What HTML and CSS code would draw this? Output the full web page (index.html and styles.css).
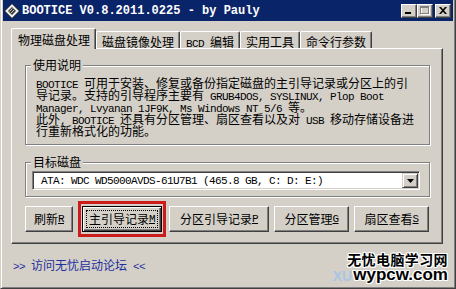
FILE: index.html
```html
<!DOCTYPE html>
<html lang="zh-CN">
<head>
<meta charset="utf-8">
<title>BOOTICE</title>
<link rel="stylesheet" href="styles.css">
</head>
<body>
<div class="window">
  <div class="titlebar">
    <svg class="app-icon" width="16" height="16" viewBox="0 0 16 16">
      <polygon points="8,0.5 15.5,8 8,15.5 0.5,8" fill="#eeeeee" stroke="#111" stroke-width="1"/>
      <polygon points="4,8 8,4 12,8 8,12" fill="#3a3a3a"/>
      <line x1="5.5" y1="8.5" x2="8.5" y2="5.5" stroke="#cfcfcf" stroke-width="0.9"/>
      <line x1="7" y1="10" x2="10" y2="7" stroke="#cfcfcf" stroke-width="0.9"/>
    </svg>
    <span class="title">BOOTICE V0.8.2011.0225 - by Pauly</span>
    <div class="caption-btns">
      <span class="cbtn"><svg width="8" height="7" viewBox="0 0 8 7"><rect x="0" y="5" width="6" height="2" fill="#000"/></svg></span>
      <span class="cbtn"><svg width="10" height="9" viewBox="0 0 10 9"><rect x="1.5" y="1.5" width="8" height="7" fill="none" stroke="#fff"/><rect x="0.5" y="0.5" width="8" height="7" fill="none" stroke="#808080"/><rect x="0" y="1" width="9" height="1" fill="#808080"/></svg></span>
      <span class="cbtn close"><svg width="8" height="7" viewBox="0 0 8 7"><path d="M0 0h2l2 2.2L6 0h2L5 3.5 8 7H6L4 4.8 2 7H0l3-3.5z" fill="#000"/></svg></span>
    </div>
  </div>

  <div class="client">
    <div class="tabs">
      <div class="tab active">物理磁盘处理</div>
      <div class="tab">磁盘镜像处理</div>
      <div class="tab"><span class="m">BCD </span>编辑</div>
      <div class="tab">实用工具</div>
      <div class="tab">命令行参数</div>
    </div>

    <div class="panel">
      <fieldset class="group info">
        <legend>使用说明</legend>
        <div class="line"><span class="m">BOOTICE </span>可用于安装、修复或备份指定磁盘的主引导记录或分区上的引</div>
        <div class="line">导记录。支持的引导程序主要有<span class="m"> GRUB4DOS, SYSLINUX, Plop Boot</span></div>
        <div class="line"><span class="m">Manager, Lvyanan 1JF9K, Ms Windows NT 5/6 </span>等。</div>
        <div class="line">此外<span class="m">, BOOTICE </span>还具有分区管理、扇区查看以及对<span class="m"> USB </span>移动存储设备进</div>
        <div class="line">行重新格式化的功能。</div>
      </fieldset>

      <fieldset class="group disk">
        <legend>目标磁盘</legend>
        <div class="combo">
          <span class="combo-text m">ATA: WDC WD5000AVDS-61U7B1 (465.8 GB, C: D: E:)</span>
          <span class="combo-btn"><svg width="7" height="4" viewBox="0 0 7 4"><path d="M0 0h7L3.5 4z" fill="#000"/></svg></span>
        </div>
      </fieldset>

      <div class="actions">
        <button class="btn w-refresh">刷新<u class="m">R</u></button>
        <div class="highlight">
          <button class="btn default w-mbr"><span class="focus">主引导记录<u class="m">M</u></span></button>
        </div>
        <button class="btn w-pbr">分区引导记录<u class="m">P</u></button>
        <button class="btn w-part">分区管理<u class="m">G</u></button>
        <button class="btn w-part">扇区查看<u class="m">S</u></button>
      </div>
    </div>

    <div class="link"><span class="m">&gt;&gt; </span>访问无忧启动论坛<span class="m"> &lt;&lt;</span></div>
  </div>

  <div class="watermark">
    <div class="wm-cn">无忧电脑学习网</div>
    <div class="wm-row"><span class="wm-faint">XU</span><span class="wm-en">wypcw.com</span></div>
  </div>
</div>
</body>
</html>
```

FILE: styles.css
```css
* { box-sizing: border-box; }

html, body {
  margin: 0;
  padding: 0;
}

body {
  width: 456px;
  height: 289px;
  overflow: hidden;
  background: #d4d0c8;
  font-family: "Noto Sans CJK SC", "Liberation Sans", sans-serif;
  font-size: 12px;
  line-height: 12px;
  color: #000;
}

.m {
  font-family: "Liberation Mono", "Noto Sans CJK SC", monospace;
  font-size: 11px;
  letter-spacing: -0.6px;
}

.window {
  position: relative;
  width: 456px;
  height: 289px;
  background: #d4d0c8;
  border-left: 1px solid #d4d0c8;
  border-right: 1px solid #404040;
  border-bottom: 1px solid #404040;
  box-shadow: inset 1px 0 #fff, inset -1px -1px #808080;
  padding: 0 2px 2px 2px;
  display: flex;
  flex-direction: column;
}

/* title bar */
.titlebar {
  height: 21px;
  flex: none;
  background: #0a246a;
  display: flex;
  align-items: center;
  padding: 0 2px 0 1px;
}

.app-icon {
  flex: none;
  margin-top: 1px;
}

.title {
  margin-left: 2px;
  color: #fff;
  font-family: "Liberation Mono", monospace;
  font-weight: bold;
  font-size: 12px;
  white-space: nowrap;
}

.caption-btns {
  margin-left: auto;
  display: flex;
  align-items: center;
}

.cbtn {
  width: 16px;
  height: 14px;
  background: #d4d0c8;
  border: 1px solid;
  border-color: #fff #404040 #404040 #fff;
  box-shadow: inset -1px -1px #808080;
  display: flex;
  align-items: center;
  justify-content: center;
}

.cbtn.close {
  margin-left: 2px;
}

/* client area */
.client {
  flex: 1;
  padding: 7px 10px 0 8px;
  display: flex;
  flex-direction: column;
}

.tabs {
  display: flex;
  align-items: flex-end;
  height: 20px;
}

.tab {
  height: 17px;
  padding: 4px 5px 0 5px;
  border-top: 1px solid #fff;
  border-left: 1px solid #fff;
  border-right: 1px solid #404040;
  box-shadow: inset -1px 0 #808080;
  border-radius: 2px 2px 0 0;
  background: #d4d0c8;
  white-space: nowrap;
}

.tab.active {
  position: relative;
  z-index: 1;
  height: 21px;
  margin-bottom: -1px;
  padding: 5px 5px 0 6px;
}

.panel {
  border-top: 1px solid #fff;
  border-left: 1px solid #fff;
  border-right: 1px solid #404040;
  border-bottom: 1px solid #404040;
  box-shadow: inset -1px -1px #808080;
  padding: 10px 12px 11px 13px;
}

/* group boxes */
.group {
  margin: 0;
  min-width: 0;
  border: 1px solid #808080;
  box-shadow: inset 1px 1px #fff, 1px 1px #fff;
}

.group legend {
  padding: 0 2px;
  line-height: 12px;
  background: #d4d0c8;
}

.info {
  padding: 6px 10px 7px 10px;
}

.info legend {
  margin-left: -5px;
}

.line {
  height: 12px;
  line-height: 12px;
  white-space: nowrap;
}

.disk {
  margin-top: 11px;
  padding: 3px 9px 6px 6px;
}

.disk legend {
  margin-left: -1px;
}

.combo {
  height: 19px;
  display: flex;
  align-items: center;
  background: #fff;
  border: 1px solid;
  border-color: #808080 #fff #fff #808080;
  box-shadow: inset 1px 1px #404040, inset -1px -1px #d4d0c8;
  padding: 1px 1px 1px 8px;
}

.combo-text {
  flex: 1;
  white-space: nowrap;
}

.combo-btn {
  width: 16px;
  height: 15px;
  background: #d4d0c8;
  border: 1px solid;
  border-color: #d4d0c8 #404040 #404040 #d4d0c8;
  box-shadow: inset 1px 1px #fff, inset -1px -1px #808080;
  display: flex;
  align-items: center;
  justify-content: center;
}

/* buttons */
.actions {
  display: flex;
  align-items: center;
  gap: 5px;
  margin-top: 9px;
}

.btn {
  height: 26px;
  margin: 0;
  padding: 0;
  font: inherit;
  color: #000;
  background: #d4d0c8;
  border: 1px solid;
  border-color: #fff #404040 #404040 #fff;
  box-shadow: inset -1px -1px #808080;
  display: flex;
  align-items: center;
  justify-content: center;
  white-space: nowrap;
}

.btn u {
  text-underline-offset: 1px;
}

.w-refresh { width: 48px; }
.w-mbr { width: 80px; }
.w-pbr { width: 100px; }
.w-part { width: 75px; }

.btn.default {
  border-color: #000;
  box-shadow: inset 1px 1px #fff, inset -1px -1px #404040, inset -2px -2px #808080;
  padding: 3px;
  align-items: stretch;
}

.focus {
  flex: 1;
  border: 1px dotted #000;
  display: flex;
  align-items: center;
  justify-content: center;
}

.highlight {
  display: flex;
  border: 3px solid #cc1b1b;
  padding: 2px 1px;
  margin: -5px -2px -5px 0;
}

.link {
  margin-top: 15px;
  padding-left: 2px;
  color: #1e2f9e;
  white-space: nowrap;
}

/* watermark overlay */
.watermark {
  position: absolute;
  left: 330px;
  top: 251px;
  width: 117px;
  display: flex;
  flex-direction: column;
  align-items: flex-end;
}

.wm-cn {
  font-family: "Noto Sans CJK SC", sans-serif;
  font-weight: bold;
  font-size: 14px;
  line-height: 16px;
  letter-spacing: 0.4px;
  color: #000;
  text-shadow: -1px -1px 0 #fff, 1px -1px 0 #fff, -1px 1px 0 #fff, 1px 1px 0 #fff,
    0 1px 0 #fff, 0 -1px 0 #fff, 1px 0 0 #fff, -1px 0 0 #fff;
}

.wm-row {
  display: flex;
  align-items: flex-end;
  margin-top: -1px;
}

.wm-faint {
  font-family: "Liberation Sans", sans-serif;
  font-weight: bold;
  font-size: 14px;
  line-height: 14px;
  color: #a9c6e4;
  margin-right: 1px;
}

.wm-en {
  font-family: "Liberation Sans", sans-serif;
  font-weight: bold;
  font-size: 17px;
  line-height: 17px;
  color: #000;
  text-shadow: -1px -1px 0 #fff, 1px -1px 0 #fff, -1px 1px 0 #fff, 1px 1px 0 #fff,
    0 1px 0 #fff, 0 -1px 0 #fff, 1px 0 0 #fff, -1px 0 0 #fff;
}
```
